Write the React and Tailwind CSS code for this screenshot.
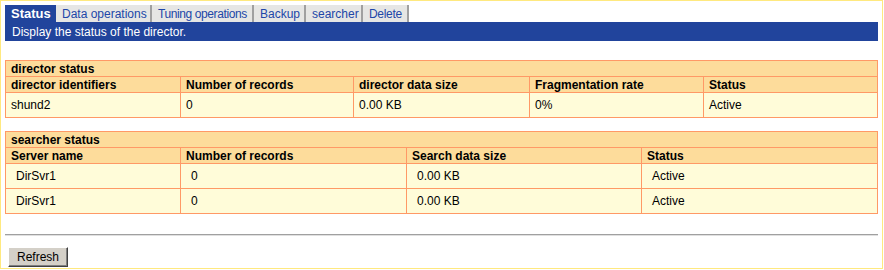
import React from "react";

const tabs = [
  ["Data operations", "w-[96px]", ""],
  ["Tuning operations", "w-[102px]", "tracking-[-0.4px]"],
  ["Backup", "w-[52px]", ""],
  ["searcher", "w-[57px]", ""],
  ["Delete", "w-[46px]", "tracking-[-0.3px]"],
];

function Cell({ children, w, bold, indent }) {
  return (
    <td
      className={`border border-[#ff9966] px-[5px] align-middle ${bold ? "font-bold" : ""} ${indent ? "pl-[10px]" : ""}`}
      style={w ? { width: w } : undefined}
    >
      {children}
    </td>
  );
}

export default function App() {
  return (
    <div
      className="w-[883px] h-[269px] border border-[#ffe97f] bg-white p-[4px] text-[12px] leading-[14px] text-black"
      style={{ fontFamily: '"Liberation Sans", Arial, sans-serif' }}
    >
      <div className="flex h-[17px] items-stretch">
        <div className="flex w-[51px] shrink-0 items-center bg-[#21449c] px-[6px] text-[13px] font-bold text-white">Status</div>
        {tabs.map(([t, w, tr]) => (
          <div
            key={t}
            className={`flex ${w} shrink-0 items-center overflow-hidden whitespace-nowrap border-r-2 border-r-[#a0a0a0] bg-[#e6e6e4] pl-[6px] text-[#2146a8] ${tr}`}
          >
            {t}
          </div>
        ))}
      </div>
      <div className="flex h-[19px] items-center bg-[#21449c] pl-[7px] text-white">
        Display the status of the director.
      </div>

      <table className="mt-[19px] w-[873px] border-collapse border border-[#ff9966]">
        <tbody>
          <tr className="h-[16px] bg-[#fddc9b]">
            <td colSpan={5} className="border border-[#ff9966] px-[5px] font-bold leading-[14px]">director status</td>
          </tr>
          <tr className="h-[16px] bg-[#fddc9b]">
            <Cell w="175px" bold>director identifiers</Cell>
            <Cell w="173px" bold>Number of records</Cell>
            <Cell w="176px" bold>director data size</Cell>
            <Cell w="174px" bold>Fragmentation rate</Cell>
            <Cell bold>Status</Cell>
          </tr>
          <tr className="h-[25px] bg-[#fffcd9]">
            <Cell>shund2</Cell>
            <Cell>0</Cell>
            <Cell>0.00 KB</Cell>
            <Cell>0%</Cell>
            <Cell>Active</Cell>
          </tr>
        </tbody>
      </table>

      <table className="mt-[13px] w-[873px] border-collapse border border-[#ff9966]">
        <tbody>
          <tr className="h-[16px] bg-[#fddc9b]">
            <td colSpan={4} className="border border-[#ff9966] px-[5px] font-bold leading-[14px]">searcher status</td>
          </tr>
          <tr className="h-[16px] bg-[#fddc9b]">
            <Cell w="175px" bold>Server name</Cell>
            <Cell w="226px" bold>Number of records</Cell>
            <Cell w="235px" bold>Search data size</Cell>
            <Cell bold>Status</Cell>
          </tr>
          {[0, 1].map((i) => (
            <tr key={i} className="h-[25px] bg-[#fffcd9]">
              <Cell indent>DirSvr1</Cell>
              <Cell indent>0</Cell>
              <Cell indent>0.00 KB</Cell>
              <Cell indent>Active</Cell>
            </tr>
          ))}
        </tbody>
      </table>

      <div className="mt-[20px] h-[2px] w-[873px] border-t border-t-[#a0a0a0] border-b border-b-[#e0e0e0]" />

      <div className="mt-[11px] pl-[3px]">
        <button className="h-[20px] w-[60px] border border-t-white border-l-white border-r-[#404040] border-b-[#404040] bg-[#d4d0c8] text-[12px] text-black shadow-[inset_-1px_-1px_0_#808080]">
          Refresh
        </button>
      </div>
    </div>
  );
}
